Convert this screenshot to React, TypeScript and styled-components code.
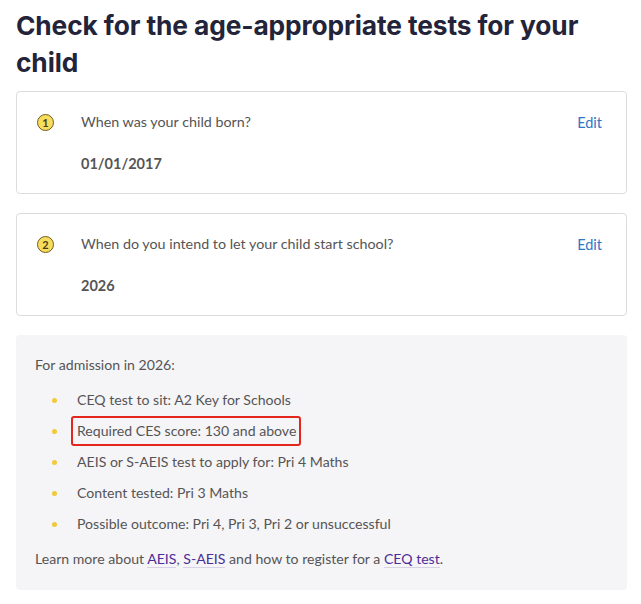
import React from "react";
import styled, { createGlobalStyle } from "styled-components";

const Global = createGlobalStyle`
  html, body { margin: 0; padding: 0; background: #ffffff; }
  body { font-family: "Lato", "Open Sans", sans-serif; -webkit-font-smoothing: antialiased; }
`;

const Page = styled.div`
  padding: 7px 14px 0 16px;
  width: 641px;
  box-sizing: border-box;
`;

const Title = styled.h1`
  margin: 0;
  font-family: "Inter", "Open Sans", sans-serif;
  font-weight: 700;
  font-size: 26.3px;
  line-height: 37px;
  letter-spacing: -0.1px;
  color: #23233a;
`;

const Stack = styled.div`
  display: flex;
  flex-direction: column;
  gap: 19px;
  margin-top: 10px;
`;

const Card = styled.section`
  border: 1px solid #dcdcdc;
  border-radius: 4px;
  padding: 20px 24px 19px 19px;
  display: grid;
  grid-template-columns: 26px 1fr auto;
  column-gap: 19px;
  row-gap: 22px;
  align-items: center;
`;

const Badge = styled.span`
  width: 15px;
  height: 15px;
  border-radius: 50%;
  background: #f8dc5e;
  border: 1px solid #6e5d1f;
  display: flex;
  align-items: center;
  justify-content: center;
  font-size: 11px;
  font-weight: 700;
  color: #4a3f14;
  line-height: 1;
  margin-left: 1px;
`;

const Question = styled.div`
  font-size: 14.3px;
  line-height: 20px;
  color: #555555;
`;

const EditLink = styled.a`
  font-size: 14.5px;
  line-height: 20px;
  color: #2e76c8;
  text-decoration: none;
  cursor: pointer;
  position: relative;
  top: 1px;
`;

const Answer = styled.div`
  grid-column: 2 / 4;
  font-size: 14.5px;
  line-height: 20px;
  font-weight: 700;
  color: #555555;
`;

const InfoBox = styled.section`
  background: #f5f4f7;
  border-radius: 4px;
  padding: 20px 19px 21px 19px;
  color: #555555;
  font-size: 14.1px;
  line-height: 20px;
`;

const Lead = styled.p`
  margin: 0;
`;

const List = styled.ul`
  list-style: none;
  margin: 15px 0 0 0;
  padding: 0;
  display: flex;
  flex-direction: column;
  gap: 11px;
`;

const Item = styled.li`
  display: flex;
  align-items: center;
  &::before {
    content: "";
    width: 5px;
    height: 5px;
    border-radius: 50%;
    background: #f1c93a;
    margin: 0 20px 0 17px;
    flex: none;
  }
`;

const Highlight = styled.span<{ $on?: boolean }>`
  position: relative;
  &::after {
    content: "";
    display: ${(p) => (p.$on ? "block" : "none")};
    position: absolute;
    top: -5px;
    bottom: -5px;
    left: -6px;
    right: -5px;
    border: 2px solid #e3271f;
    border-radius: 3px;
  }
`;

const Learn = styled.p`
  margin: 15px 0 0 0;
`;

const Link = styled.a`
  color: #4b2d97;
  text-decoration: none;
  border-bottom: 1px solid #d8d2e6;
  cursor: pointer;
`;

const questions = [
  { n: 1, q: "When was your child born?", a: "01/01/2017" },
  { n: 2, q: "When do you intend to let your child start school?", a: "2026" },
];

const items = [
  { t: "CEQ test to sit: A2 Key for Schools" },
  { t: "Required CES score: 130 and above", hl: true },
  { t: "AEIS or S-AEIS test to apply for: Pri 4 Maths" },
  { t: "Content tested: Pri 3 Maths" },
  { t: "Possible outcome: Pri 4, Pri 3, Pri 2 or unsuccessful" },
];

export default function App() {
  return (
    <>
      <Global />
      <Page>
        <Title>Check for the age-appropriate tests for your child</Title>
        <Stack>
          {questions.map((c) => (
            <Card key={c.n}>
              <Badge>{c.n}</Badge>
              <Question>{c.q}</Question>
              <EditLink>Edit</EditLink>
              <Answer>{c.a}</Answer>
            </Card>
          ))}
          <InfoBox>
            <Lead>For admission in 2026:</Lead>
            <List>
              {items.map((it) => (
                <Item key={it.t}>
                  <Highlight $on={it.hl}>{it.t}</Highlight>
                </Item>
              ))}
            </List>
            <Learn>
              Learn more about <Link>AEIS</Link>, <Link>S-AEIS</Link> and how to register for a{" "}
              <Link>CEQ test</Link>.
            </Learn>
          </InfoBox>
        </Stack>
      </Page>
    </>
  );
}
